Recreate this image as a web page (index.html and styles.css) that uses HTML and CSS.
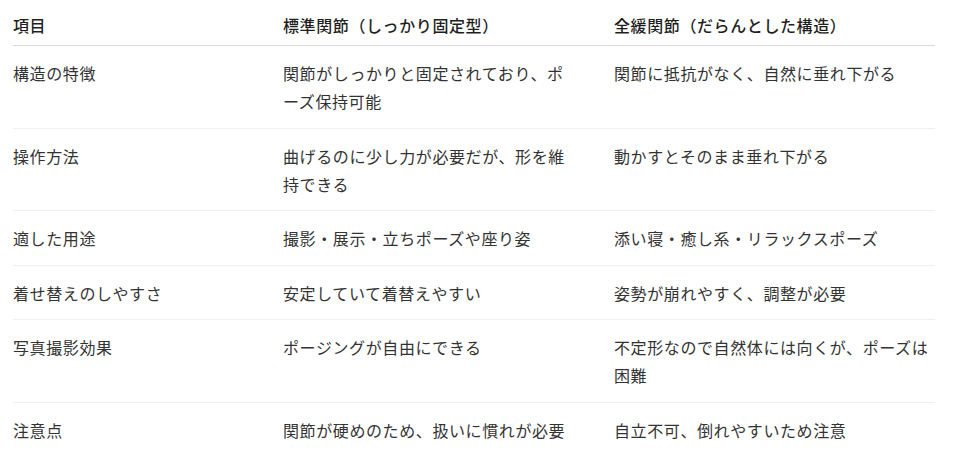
FILE: index.html
```html
<!DOCTYPE html>
<html lang="ja">
<head>
<meta charset="utf-8">
<link rel="stylesheet" href="styles.css">
</head>
<body>
<table class="cmp">
  <thead>
    <tr>
      <th class="c1">項目</th>
      <th class="c2">標準関節（しっかり固定型）</th>
      <th class="c3">全緩関節（だらんとした構造）</th>
    </tr>
  </thead>
  <tbody>
    <tr>
      <td class="c1">構造の特徴</td>
      <td class="c2">関節がしっかりと固定されており、ポーズ保持可能</td>
      <td class="c3">関節に抵抗がなく、自然に垂れ下がる</td>
    </tr>
    <tr>
      <td class="c1">操作方法</td>
      <td class="c2">曲げるのに少し力が必要だが、形を維持できる</td>
      <td class="c3">動かすとそのまま垂れ下がる</td>
    </tr>
    <tr>
      <td class="c1">適した用途</td>
      <td class="c2">撮影・展示・立ちポーズや座り姿</td>
      <td class="c3">添い寝・癒し系・リラックスポーズ</td>
    </tr>
    <tr>
      <td class="c1">着せ替えのしやすさ</td>
      <td class="c2">安定していて着替えやすい</td>
      <td class="c3">姿勢が崩れやすく、調整が必要</td>
    </tr>
    <tr>
      <td class="c1">写真撮影効果</td>
      <td class="c2">ポージングが自由にできる</td>
      <td class="c3">不定形なので自然体には向くが、ポーズは困難</td>
    </tr>
    <tr class="last">
      <td class="c1">注意点</td>
      <td class="c2">関節が硬めのため、扱いに慣れが必要</td>
      <td class="c3">自立不可、倒れやすいため注意</td>
    </tr>
  </tbody>
</table>
</body>
</html>
```

FILE: styles.css
```css
html, body {
  margin: 0;
  padding: 0;
  background: #ffffff;
}
body {
  padding-left: 13px;
  font-family: "Noto Sans CJK JP", "Noto Sans", sans-serif;
  font-size: 16px;
  letter-spacing: 0.6px;
  color: #333333;
}
.cmp {
  border-collapse: collapse;
  table-layout: fixed;
  width: 922px;
}
.cmp th, .cmp td {
  text-align: left;
  vertical-align: top;
  line-height: 28px;
}
.cmp th {
  font-weight: 500;
  color: #1f1f1f;
  padding: 11px 0 6px 0;
  border-bottom: 1px solid #d9d9d9;
}
.cmp td {
  font-weight: 400;
  padding: 13px 0 12.5px 0;
  border-bottom: 1px solid #efefef;
}
.cmp tr.last td {
  border-bottom: none;
}
.c1 { width: 270px; }
.cmp .c2 { width: 290px; padding-right: 41px; }
.c3 { width: 321px; }
```
